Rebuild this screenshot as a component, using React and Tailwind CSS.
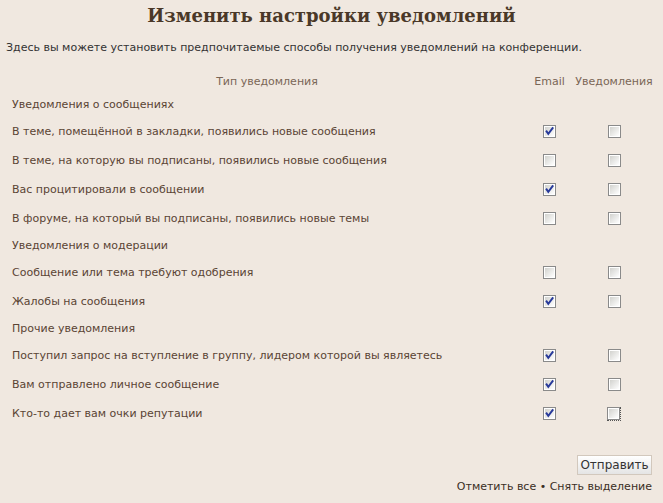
import React from "react";

const sans = { fontFamily: '"DejaVu Sans", Verdana, sans-serif' };

function Box({ checked, focus }) {
  const svg = (
    <svg width="13" height="13" viewBox="0 0 13 13" className="block">
      <defs>
        <linearGradient id="gbox" x1="0" y1="0" x2="1" y2="1">
          <stop offset="0" stopColor="#d2d2ce" />
          <stop offset="1" stopColor="#ffffff" />
        </linearGradient>
      </defs>
      <rect x="0.5" y="0.5" width="12" height="12" fill="#ffffff" stroke="#8a8a8a" />
      <rect x="2" y="2" width="9" height="9" fill="url(#gbox)" />
      {checked && (
        <polyline
          points="3.6,6.4 5.3,8.9 9.6,3.2"
          fill="none"
          stroke="#27399a"
          strokeWidth="1.9"
          strokeLinecap="square"
        />
      )}
    </svg>
  );
  if (focus) {
    return <div className="border-r border-b border-dotted border-[#555]">{svg}</div>;
  }
  return svg;
}

const sections = [
  {
    title: "Уведомления о сообщениях",
    rows: [
      ["В теме, помещённой в закладки, появились новые сообщения", true],
      ["В теме, на которую вы подписаны, появились новые сообщения", false],
      ["Вас процитировали в сообщении", true],
      ["В форуме, на который вы подписаны, появились новые темы", false],
    ],
  },
  {
    title: "Уведомления о модерации",
    rows: [
      ["Сообщение или тема требуют одобрения", false],
      ["Жалобы на сообщения", true],
    ],
  },
  {
    title: "Прочие уведомления",
    rows: [
      ["Поступил запрос на вступление в группу, лидером которой вы являетесь", true],
      ["Вам отправлено личное сообщение", true],
      ["Кто-то дает вам очки репутации", true, true],
    ],
  },
];

export default function App() {
  return (
    <div className="w-[663px] h-[503px] bg-[#f0e8e0] overflow-hidden px-[6px]" style={sans}>
      <h1
        className="pt-[3px] text-center text-[18px] leading-[26px] font-bold text-[#4a3828]"
        style={{ fontFamily: '"DejaVu Serif", Georgia, serif' }}
      >
        Изменить настройки уведомлений
      </h1>
      <p className="mt-[12px] text-[11px] leading-[14px] text-[#333333]">
        Здесь вы можете установить предпочитаемые способы получения уведомлений на конференции.
      </p>
      <div className="mt-[17px] grid grid-cols-[1fr_43px_86px] text-[11px] leading-[14px]">
        <div className="h-[20px] flex items-center justify-center text-[#7a6656]">Тип уведомления</div>
        <div className="h-[20px] flex items-center justify-center text-[#7a6656]">Email</div>
        <div className="h-[20px] flex items-center justify-center text-[#7a6656]">Уведомления</div>
        {sections.map((s) => (
          <React.Fragment key={s.title}>
            <div className="col-span-3 h-[25px] flex items-center pl-[6px] text-[#5a4434]">{s.title}</div>
            {s.rows.map(([label, email, focus]) => (
              <React.Fragment key={label}>
                <div className="h-[29px] flex items-center pl-[6px] text-[#5a4434]">{label}</div>
                <div className="h-[29px] flex items-center justify-center">
                  <Box checked={email} />
                </div>
                <div className="h-[29px] flex items-center justify-center">
                  <Box checked={false} focus={focus} />
                </div>
              </React.Fragment>
            ))}
          </React.Fragment>
        ))}
      </div>
      <div className="mt-[27px] flex flex-col items-end pr-[5px]">
        <button
          className="h-[20px] w-[75px] border border-[#d2c8bd] bg-gradient-to-b from-[#ffffff] to-[#e4e4e4] text-[12px] leading-[18px] text-[#333333]"
          style={sans}
        >
          Отправить
        </button>
        <div className="mt-[5px] text-[11px] leading-[14px] text-[#3a2e24]">
          Отметить все • Снять выделение
        </div>
      </div>
    </div>
  );
}
